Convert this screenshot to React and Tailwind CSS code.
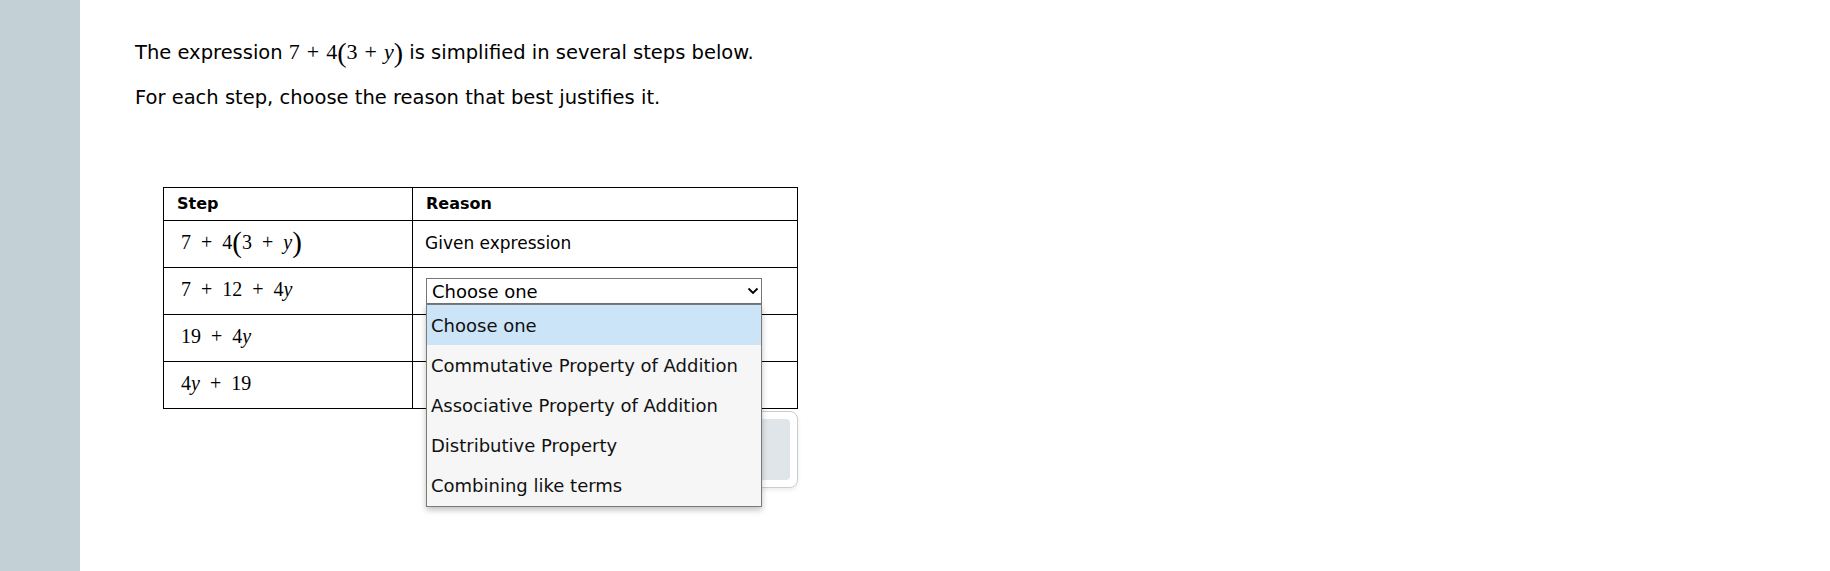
import React from "react";

const sans = { fontFamily: '"DejaVu Sans", Verdana, sans-serif' };
const serif = { fontFamily: '"Liberation Serif", "Times New Roman", serif' };

// plus sign with math spacing
const Plus = ({ gap }) => <span className={gap}>+</span>;

const Paren = ({ children, size }) => (
  <span className={size + " leading-none align-[-3px]"}>{children}</span>
);

const cellGap = "mx-[10px]";

const steps = [
  {
    expr: (
      <>
        7<Plus gap={cellGap} />4<Paren size="text-[29px]">(</Paren>3<Plus gap={cellGap} /><i>y</i>
        <Paren size="text-[29px]">)</Paren>
      </>
    ),
    reason: "given",
  },
  { expr: <>7<Plus gap={cellGap} />12<Plus gap={cellGap} />4<i>y</i></>, reason: "open" },
  { expr: <>19<Plus gap={cellGap} />4<i>y</i></>, reason: "none" },
  { expr: <>4<i>y</i><Plus gap={cellGap} />19</>, reason: "none" },
];

const options = [
  "Choose one",
  "Commutative Property of Addition",
  "Associative Property of Addition",
  "Distributive Property",
  "Combining like terms",
];

const Chevron = () => (
  <svg width="12" height="8" viewBox="0 0 12 8" className="text-black">
    <path d="M1.5 1.5 L6 6 L10.5 1.5" fill="none" stroke="currentColor" strokeWidth="1.8" />
  </svg>
);

const OpenSelect = () => (
  <div className="relative w-[336px]">
    <div className="h-[26px] border border-[#767676] bg-white flex items-center justify-between pl-[5px] pr-[2px] text-[18px] text-black">
      <span>Choose one</span>
      <Chevron />
    </div>
    <div className="absolute left-0 top-[26px] w-[336px] z-10 bg-[#f6f6f6] border border-[#7a7a7a] shadow-[0_3px_6px_rgba(0,0,0,0.25)]">
      {options.map((o, i) => (
        <div
          key={o}
          className={
            "h-[40.2px] flex items-center px-[4px] text-[18px] text-[#111] " +
            (i === 0 ? "bg-[#cce4f7]" : "")
          }
        >
          {o}
        </div>
      ))}
    </div>
  </div>
);

export default function App() {
  return (
    <div className="flex min-h-[571px] bg-white" style={sans}>
      <div className="w-[80px] shrink-0 bg-[#c3d0d6]" />
      <div className="flex-1 pl-[55px] pt-[38px]">
        <p className="text-[19.5px] text-black leading-[28px]">
          The expression{" "}
          <span className="text-[22px]" style={serif}>
            7<Plus gap="mx-[7px]" />4<Paren size="text-[28px]">(</Paren>3<Plus gap="mx-[7px]" />
            <i>y</i>
            <Paren size="text-[28px]">)</Paren>
          </span>{" "}
          is simplified in several steps below.
        </p>
        <p className="text-[19.5px] text-black leading-[28px] mt-[17px]">
          For each step, choose the reason that best justifies it.
        </p>

        <div className="ml-[28px] mt-[75px] w-[635px]">
          <table className="border-collapse w-[635px] text-black">
            <thead>
              <tr className="h-[33px]">
                <th className="w-[249px] border border-black text-left font-bold text-[16px] px-[13px]">
                  Step
                </th>
                <th className="border border-black text-left font-bold text-[16px] px-[13px]">
                  Reason
                </th>
              </tr>
            </thead>
            <tbody>
              {steps.map((s, i) => (
                <tr key={i} className="h-[47px]">
                  <td className="border border-black pl-[17px] pb-[5px] text-[20px] align-middle" style={serif}>
                    {s.expr}
                  </td>
                  <td className="border border-black pl-[12px] pr-[13px] text-[17px]">
                    {s.reason === "given" && <span>Given expression</span>}
                    {s.reason === "open" && <div className="pl-[1px]"><OpenSelect /></div>}
                  </td>
                </tr>
              ))}
            </tbody>
          </table>

          {/* check answer area, mostly covered by the open list */}
          <div className="flex justify-end mt-[2px]">
            <div className="w-[240px] h-[77px] rounded-[8px] border border-[#c5ced3] p-[7px] shadow-[0_2px_4px_rgba(0,0,0,0.08)]">
              <div className="h-full rounded-[4px] bg-[#dfe5e8]" />
            </div>
          </div>
        </div>
      </div>
    </div>
  );
}
